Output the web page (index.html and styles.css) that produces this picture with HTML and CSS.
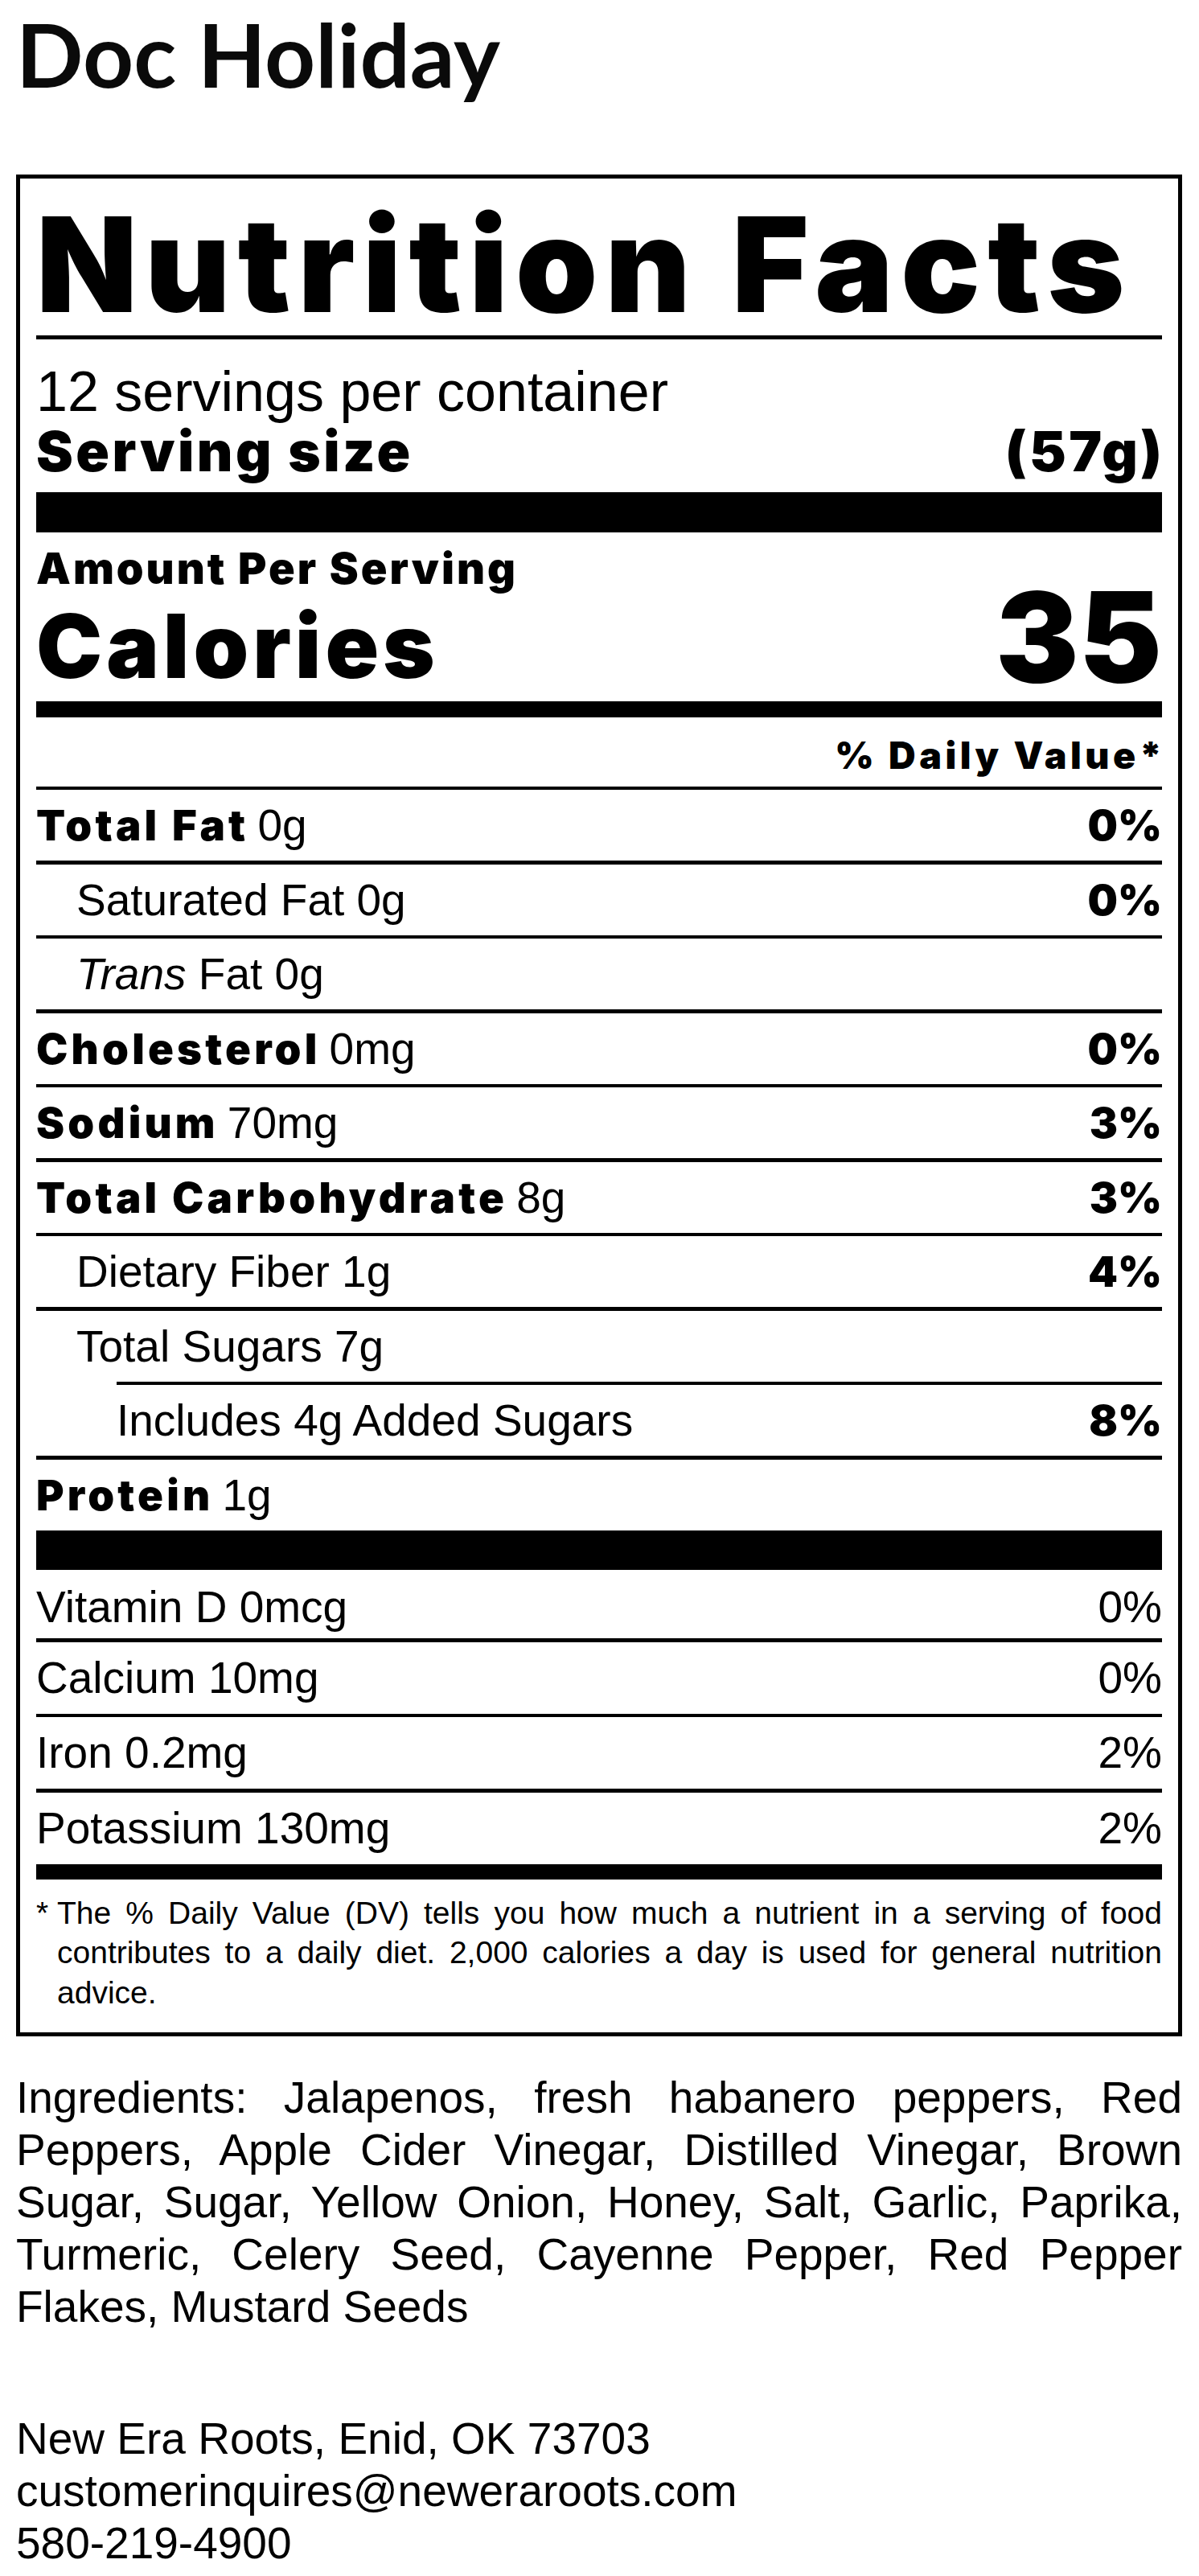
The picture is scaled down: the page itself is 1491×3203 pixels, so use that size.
FILE: index.html
```html
<!DOCTYPE html>
<html lang="en">
<head>
<meta charset="utf-8">
<title>Doc Holiday – Nutrition Facts</title>
<link rel="stylesheet" href="styles.css">
</head>
<body>
<main class="page">
  <h1 class="product">Doc Holiday</h1>

  <section class="label">
    <h2 class="nf-title">Nutrition Facts</h2>
    <div class="rule rule-top"></div>

    <div class="servings">
      <p class="per-container">12 servings per container</p>
      <p class="serving-size"><span>Serving size</span><span class="ss-value">(57g)</span></p>
    </div>
    <div class="bar bar-thick"></div>

    <div class="calories-block">
      <div class="cal-left">
        <p class="amount">Amount Per Serving</p>
        <p class="calories">Calories</p>
      </div>
      <p class="cal-value">35</p>
    </div>
    <div class="bar bar-mid"></div>

    <p class="dv-head">% Daily Value*</p>

    <div class="rule"></div>
    <div class="row"><span><span class="hv nm">Total Fat</span> 0g</span><span class="hv">0%</span></div>
    <div class="rule"></div>
    <div class="row sub"><span>Saturated Fat 0g</span><span class="hv">0%</span></div>
    <div class="rule"></div>
    <div class="row sub"><span><i>Trans</i> Fat 0g</span></div>
    <div class="rule"></div>
    <div class="row"><span><span class="hv nm">Cholesterol</span> 0mg</span><span class="hv">0%</span></div>
    <div class="rule"></div>
    <div class="row"><span><span class="hv nm">Sodium</span> 70mg</span><span class="hv">3%</span></div>
    <div class="rule"></div>
    <div class="row"><span><span class="hv nm">Total Carbohydrate</span> 8g</span><span class="hv">3%</span></div>
    <div class="rule"></div>
    <div class="row sub"><span>Dietary Fiber 1g</span><span class="hv">4%</span></div>
    <div class="rule"></div>
    <div class="row sub"><span>Total Sugars 7g</span></div>
    <div class="rule rule-sub2"></div>
    <div class="row sub2"><span>Includes 4g Added Sugars</span><span class="hv">8%</span></div>
    <div class="rule"></div>
    <div class="row"><span><span class="hv nm">Protein</span> 1g</span></div>
    <div class="bar bar-thick"></div>

    <div class="row vit vit-first"><span>Vitamin D 0mcg</span><span>0%</span></div>
    <div class="rule"></div>
    <div class="row vit"><span>Calcium 10mg</span><span>0%</span></div>
    <div class="rule"></div>
    <div class="row vit"><span>Iron 0.2mg</span><span>2%</span></div>
    <div class="rule"></div>
    <div class="row vit"><span>Potassium 130mg</span><span>2%</span></div>
    <div class="bar bar-mid"></div>

    <div class="footnote">
      <span class="star">*</span>
      <p>The % Daily Value (DV) tells you how much a nutrient in a serving of food contributes to a daily diet. 2,000 calories a day is used for general nutrition advice.</p>
    </div>
  </section>

  <p class="ingredients">Ingredients: Jalapenos, fresh habanero peppers, Red Peppers, Apple Cider Vinegar, Distilled Vinegar, Brown Sugar, Sugar, Yellow Onion, Honey, Salt, Garlic, Paprika, Turmeric, Celery Seed, Cayenne Pepper, Red Pepper Flakes, Mustard Seeds</p>

  <address class="contact">
    <span>New Era Roots, Enid, OK 73703</span>
    <span>customerinquires@neweraroots.com</span>
    <span>580-219-4900</span>
  </address>
</main>
</body>
</html>
```

FILE: styles.css
```css
* {
  box-sizing: border-box;
  margin: 0;
  padding: 0;
}

html, body {
  background: #ffffff;
  color: #000000;
}

body {
  font-family: "Liberation Sans", Arial, sans-serif;
}

.page {
  width: 1491px;
  padding: 0 21px 0 20px;
}

.product {
  font-family: Lato, "Noto Sans", sans-serif;
  font-weight: 700;
  font-size: 110px;
  line-height: 132px;
  margin-bottom: 85px;
  color: #0a0a0a;
}

/* ---------- label box ---------- */
.label {
  width: 1450px;
  border: 5px solid #000;
  padding: 0 20px 25.1px 20px;
}

.hv,
.nf-title,
.serving-size,
.amount,
.calories,
.cal-value,
.dv-head {
  font-family: Inter, "DejaVu Sans", sans-serif;
  font-weight: 900;
}

.nf-title {
  font-size: 163.7px;
  line-height: 166px;
  height: 195.3px;
  padding-top: 22.8px;
  letter-spacing: 9.3px;
  white-space: nowrap;
}

.rule {
  height: 4.5px;
  background: #000;
}

.rule-top {
  height: 5px;
}

.rule-sub2 {
  margin-left: 100px;
}

.bar {
  background: #000;
}

.bar-thick {
  height: 49.4px;
}

.bar-mid {
  height: 19.4px;
}

.servings {
  height: 190px;
  padding-top: 27.6px;
}

.per-container {
  font-size: 70px;
  line-height: 75px;
  white-space: nowrap;
}

.serving-size {
  display: flex;
  justify-content: space-between;
  font-size: 68.8px;
  line-height: 72px;
  letter-spacing: 3.5px;
  white-space: nowrap;
}

.ss-value {
  margin-right: -3.5px;
}

.calories-block {
  height: 210.6px;
  display: flex;
  justify-content: space-between;
  align-items: flex-end;
}

.amount {
  font-size: 54px;
  line-height: 54px;
  padding-top: 18.3px;
  letter-spacing: 3px;
  white-space: nowrap;
}

.calories {
  font-size: 110px;
  line-height: 138.3px;
  letter-spacing: 5px;
}

.cal-value {
  font-size: 155px;
  line-height: 160px;
}

.dv-head {
  height: 86.3px;
  padding-top: 10.5px;
  margin-right: -4.5px;
  font-size: 46.5px;
  line-height: 75.8px;
  letter-spacing: 4.5px;
  text-align: right;
}

/* ---------- nutrient rows ---------- */
.row {
  display: flex;
  justify-content: space-between;
  height: 88px;
  font-size: 55px;
  line-height: 88px;
  white-space: nowrap;
}

.row .hv {
  font-size: 52.7px;
}

.row .nm {
  letter-spacing: 4.2px;
  margin-right: -4.2px;
}

.row.sub {
  padding-left: 50px;
}

.row.sub2 {
  padding-left: 100px;
}

.row.vit {
  height: 89px;
  line-height: 89px;
}

.row.vit-first {
  height: 85px;
  padding-top: 8px;
  line-height: 77px;
}

/* ---------- footnote ---------- */
.footnote {
  display: flex;
  padding-top: 16.4px;
  font-size: 39px;
  line-height: 49.5px;
}

.star {
  flex: none;
  width: 26px;
}

.footnote p {
  flex: 1;
  text-align: justify;
}

/* ---------- below the label ---------- */
.ingredients {
  width: 1450px;
  margin-top: 43.4px;
  font-size: 55px;
  line-height: 65px;
  text-align: justify;
}

.contact {
  display: flex;
  flex-direction: column;
  margin-top: 99px;
  font-style: normal;
  font-size: 55px;
  line-height: 65px;
}
```
